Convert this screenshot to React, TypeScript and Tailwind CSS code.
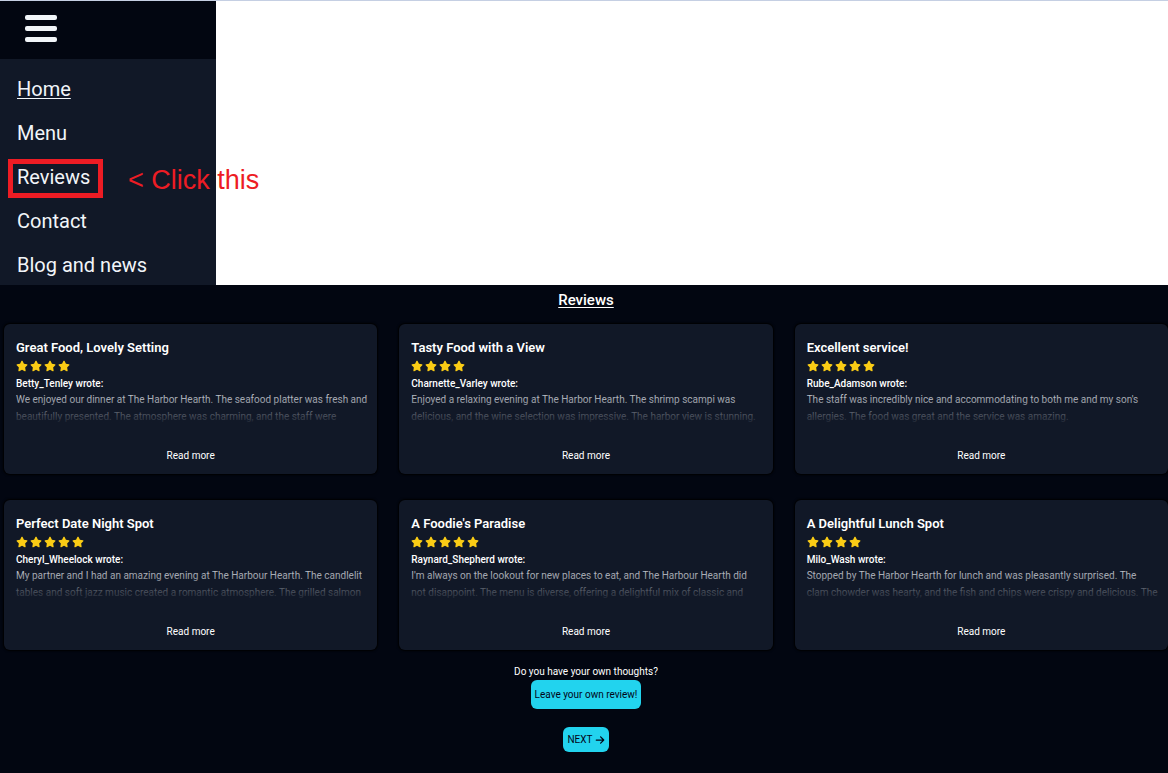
import { FaArrowRight, FaStar } from "react-icons/fa6";

type Review = {
  title: string;
  stars: number;
  author: string;
  lines: [string, string];
};

const reviews: Review[] = [
  {
    title: "Great Food, Lovely Setting",
    stars: 4,
    author: "Betty_Tenley",
    lines: [
      "We enjoyed our dinner at The Harbor Hearth. The seafood platter was fresh and",
      "beautifully presented. The atmosphere was charming, and the staff were",
    ],
  },
  {
    title: "Tasty Food with a View",
    stars: 4,
    author: "Charnette_Varley",
    lines: [
      "Enjoyed a relaxing evening at The Harbor Hearth. The shrimp scampi was",
      "delicious, and the wine selection was impressive. The harbor view is stunning.",
    ],
  },
  {
    title: "Excellent service!",
    stars: 5,
    author: "Rube_Adamson",
    lines: [
      "The staff was incredibly nice and accommodating to both me and my son's",
      "allergies. The food was great and the service was amazing.",
    ],
  },
  {
    title: "Perfect Date Night Spot",
    stars: 5,
    author: "Cheryl_Wheelock",
    lines: [
      "My partner and I had an amazing evening at The Harbour Hearth. The candlelit",
      "tables and soft jazz music created a romantic atmosphere. The grilled salmon",
    ],
  },
  {
    title: "A Foodie's Paradise",
    stars: 5,
    author: "Raynard_Shepherd",
    lines: [
      "I'm always on the lookout for new places to eat, and The Harbour Hearth did",
      "not disappoint. The menu is diverse, offering a delightful mix of classic and",
    ],
  },
  {
    title: "A Delightful Lunch Spot",
    stars: 4,
    author: "Milo_Wash",
    lines: [
      "Stopped by The Harbor Hearth for lunch and was pleasantly surprised. The",
      "clam chowder was hearty, and the fish and chips were crispy and delicious. The",
    ],
  },
];

const links = ["Home", "Menu", "Reviews", "Contact", "Blog and news"];

function Sidebar() {
  return (
    <aside className="relative w-54 bg-[#111827]">
      <div className="flex h-[58px] items-center bg-[#020611] px-6">
        <button type="button" aria-label="Toggle menu" className="pb-1">
          <svg viewBox="0 0 34 28" className="block h-7 w-[34px] fill-slate-100" aria-hidden="true">
            <rect x="1" y="1" width="32" height="5" rx="2" />
            <rect x="1" y="12" width="32" height="5" rx="2" />
            <rect x="1" y="23" width="32" height="5" rx="2" />
          </svg>
        </button>
      </div>
      <nav className="pt-2">
        <ul>
          {links.map((label) => (
            <li key={label} className="relative px-[17px] py-2 text-xl leading-7 last:pb-1.5">
              <a
                href="#"
                className={
                  label === "Home"
                    ? "text-slate-100 underline decoration-1 underline-offset-2"
                    : "text-slate-100"
                }
              >
                {label}
              </a>
              {label === "Reviews" && (
                <>
                  <span className="absolute top-1 left-2 h-[39px] w-[95px] border-5 border-[#ed1c24]" />
                  <span className="absolute top-1 left-32 font-['Liberation_Sans',sans-serif] text-[27px] leading-[42px] whitespace-nowrap text-[#ed1c24]">
                    &lt; Click this
                  </span>
                </>
              )}
            </li>
          ))}
        </ul>
      </nav>
    </aside>
  );
}

function ReviewCard({ review }: { review: Review }) {
  return (
    <article className="flex flex-col rounded-md bg-[#111827] px-3 pt-3 pb-1.5 shadow-[0_0_2px_1px_#000]">
      <h2 className="text-[13px] leading-6 font-semibold text-white">{review.title}</h2>
      <div className="flex h-3 items-center gap-0.5" role="img" aria-label={`${review.stars} stars`}>
        {Array.from({ length: review.stars }, (_, i) => (
          <FaStar key={i} className="h-3 w-3 text-[#facc15]" />
        ))}
      </div>
      <p className="pt-1 text-[10px] leading-[15px] font-medium text-white">{review.author} wrote:</p>
      <div className="relative pb-[19px]">
        <p className="text-[10px] leading-[17px] whitespace-nowrap text-gray-300">
          {review.lines[0]}
          <br />
          {review.lines[1]}
        </p>
        <div className="absolute -inset-x-2 top-0 h-[34px] bg-linear-to-b from-[#11182700] to-[#111827]" />
      </div>
      <button type="button" className="mx-auto px-2 text-[10px] leading-6 text-white">
        Read more
      </button>
    </article>
  );
}

export default function App() {
  return (
    <div className="flex min-h-screen flex-col bg-[#020611] font-[Roboto,sans-serif]">
      <div className="flex border-t border-[#c5cfe3] bg-white">
        <Sidebar />
      </div>
      <main className="flex flex-col">
        <h1 className="pt-[3px] pl-1 text-center text-[15px] leading-6 font-medium text-white underline decoration-1 underline-offset-2">
          Reviews
        </h1>
        <section className="grid grid-cols-3 gap-x-[22px] gap-y-[26px] pt-3 pl-1">
          {reviews.map((review) => (
            <ReviewCard key={review.title} review={review} />
          ))}
        </section>
        <section className="flex flex-col items-center pt-[14px] pl-1">
          <p className="text-[10px] leading-4 text-white">Do you have your own thoughts?</p>
          <button
            type="button"
            className="h-[29px] rounded-md bg-[#22d3ee] px-1 text-[10px] text-slate-950"
          >
            Leave your own review!
          </button>
          <button
            type="button"
            className="mt-[18px] flex h-[25px] items-center gap-0.5 rounded-md bg-[#22d3ee] px-1 text-[10px] text-slate-950"
          >
            NEXT
            <FaArrowRight className="h-2.5 w-2.5" aria-hidden="true" />
          </button>
        </section>
      </main>
    </div>
  );
}
